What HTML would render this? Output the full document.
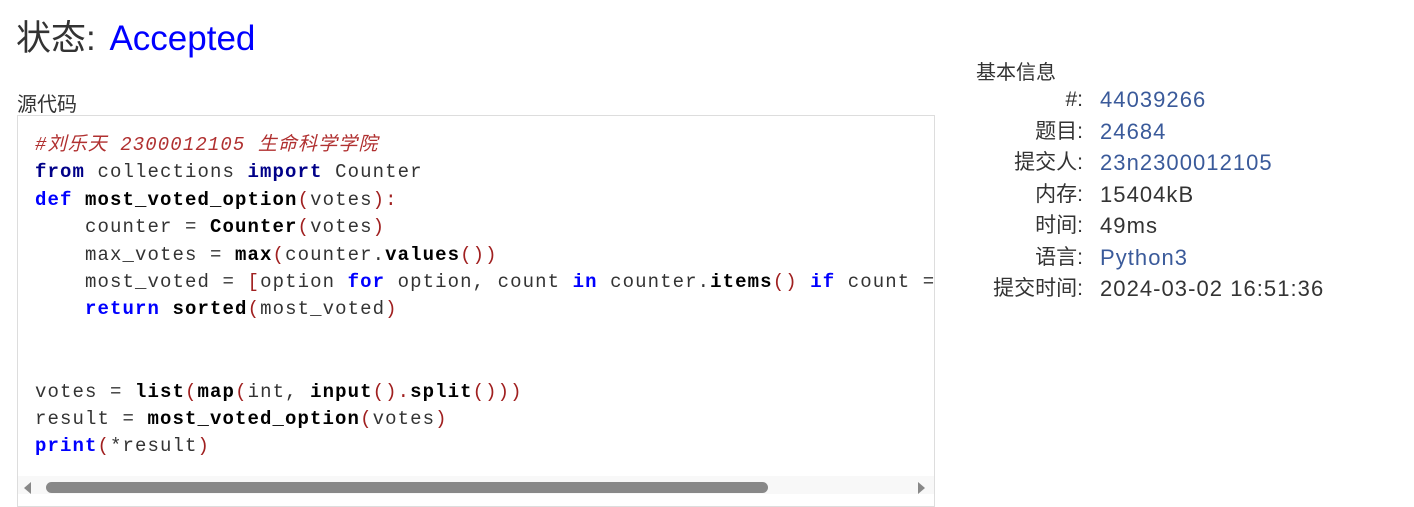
<!DOCTYPE html>
<html><head><meta charset="utf-8"><style>
body{margin:0;width:1414px;height:493px;overflow:hidden;background:#fff;font-family:"Liberation Sans","Noto Sans CJK SC",sans-serif;color:#333;position:relative}
.t{position:absolute;left:16px;top:10px;font-size:35px;color:#333;white-space:nowrap}
.t span{color:#0000ff;margin-left:4px}
.src{position:absolute;left:17px;top:88px;font-size:20px}
.box{position:absolute;left:17px;top:115px;width:916px;height:390px;border:1px solid #ddd;overflow:hidden}
pre{margin:0;position:absolute;left:17px;top:16px;font-family:"Liberation Mono","Noto Sans CJK SC",monospace;font-size:19px;letter-spacing:1.1px;line-height:27.4px;color:#333;white-space:pre}
.c{color:#b03030;font-style:italic}.k{color:#000088;font-weight:bold}.kb{color:#0000ff;font-weight:bold}.f{color:#000;font-weight:bold}.p{color:#a02020}
.sb{position:absolute;left:0;top:360px;width:916px;height:18px;background:#f8f8f8}
.th{position:absolute;left:28px;top:6px;width:722px;height:11px;border-radius:6px;background:#888}
.ar{position:absolute;top:6px;width:0;height:0;border-top:6px solid transparent;border-bottom:6px solid transparent}
.info{position:absolute;left:976px;top:56px;font-size:20px}
.row{position:absolute;left:943px;width:420px;height:31px;line-height:31px;white-space:nowrap;font-size:21px}
.l{position:absolute;left:0;top:0;width:140px;text-align:right}
.v{position:absolute;left:157px;top:0;font-size:22px;letter-spacing:1.05px}
a{color:#3a5a9a;text-decoration:none}
</style></head><body>
<div class="t">状态: <span>Accepted</span></div>
<div class="src">源代码</div>
<div class="box"><pre><span class="c">#刘乐天 2300012105 生命科学学院</span>
<span class="k">from</span> collections <span class="k">import</span> Counter
<span class="kb">def</span> <span class="f">most_voted_option</span><span class="p">(</span>votes<span class="p">):</span>
    counter = <span class="f">Counter</span><span class="p">(</span>votes<span class="p">)</span>
    max_votes = <span class="f">max</span><span class="p">(</span>counter.<span class="f">values</span><span class="p">())</span>
    most_voted = <span class="p">[</span>option <span class="kb">for</span> option, count <span class="kb">in</span> counter.<span class="f">items</span><span class="p">()</span> <span class="kb">if</span> count == max_votes<span class="p">]</span>
    <span class="kb">return</span> <span class="f">sorted</span><span class="p">(</span>most_voted<span class="p">)</span>


votes = <span class="f">list</span><span class="p">(</span><span class="f">map</span><span class="p">(</span>int, <span class="f">input</span><span class="p">().</span><span class="f">split</span><span class="p">()))</span>
result = <span class="f">most_voted_option</span><span class="p">(</span>votes<span class="p">)</span>
<span class="kb">print</span><span class="p">(</span>*result<span class="p">)</span></pre>
<div class="sb"><div class="ar" style="left:6px;border-right:7px solid #888"></div><div class="th"></div><div class="ar" style="left:900px;border-left:7px solid #888"></div></div></div>
<div class="info">基本信息</div>
<div class="row" style="top:84px"><span class="l">#:</span><a class="v">44039266</a></div>
<div class="row" style="top:116px"><span class="l">题目:</span><a class="v">24684</a></div>
<div class="row" style="top:147px"><span class="l">提交人:</span><a class="v">23n2300012105</a></div>
<div class="row" style="top:179px"><span class="l">内存:</span><span class="v">15404kB</span></div>
<div class="row" style="top:210px"><span class="l">时间:</span><span class="v">49ms</span></div>
<div class="row" style="top:242px"><span class="l">语言:</span><a class="v">Python3</a></div>
<div class="row" style="top:273px"><span class="l">提交时间:</span><span class="v">2024-03-02 16:51:36</span></div>
</body></html>
